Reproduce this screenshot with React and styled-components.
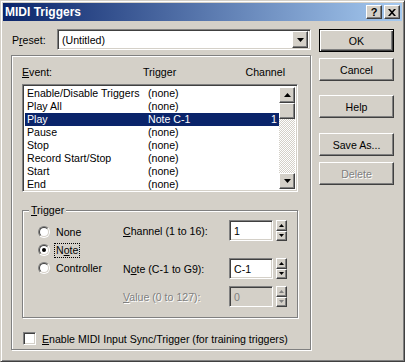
import React from 'react';
import styled, { createGlobalStyle, css } from 'styled-components';

const face = '#d4d0c8';

const GlobalStyle = createGlobalStyle`
  html, body {
    margin: 0;
    padding: 0;
    background: ${face};
  }
  body {
    font-family: "Liberation Sans", Arial, sans-serif;
    font-size: 10.6px;
    color: #000;
  }
  * {
    box-sizing: border-box;
  }
`;

const raised = css`
  border: 1px solid;
  border-color: #fff #404040 #404040 #fff;
  box-shadow: inset -1px -1px #808080, inset 1px 1px ${face};
  background: ${face};
`;

const sunken = css`
  border: 1px solid;
  border-color: #808080 #fff #fff #808080;
  box-shadow: inset 1px 1px #404040, inset -1px -1px ${face};
`;

const etched = css`
  border: 1px solid #808080;
  box-shadow: inset 1px 1px #fff, 1px 1px #fff;
`;

const disabledText = css`
  color: #808080;
  text-shadow: 1px 1px #fff;
`;

const Window = styled.div`
  width: 405px;
  height: 362px;
  display: flex;
  flex-direction: column;
  padding: 2px;
  background: ${face};
  border: 1px solid;
  border-color: ${face} #404040 #404040 ${face};
  box-shadow: inset 1px 1px #fff, inset -1px -1px #808080;
`;

const TitleBar = styled.div`
  height: 18px;
  display: flex;
  align-items: center;
  padding: 0 2px 0 2px;
  background: linear-gradient(to right, #0a246a, #a6caf0);
  color: #fff;
  font-weight: bold;
  font-size: 12px;
`;

const TitleText = styled.span`
  flex: 1;
`;

const CaptionButton = styled.div`
  ${raised};
  width: 16px;
  height: 14px;
  display: flex;
  align-items: center;
  justify-content: center;
  color: #000;
  font-size: 11px;
  font-weight: bold;
  margin-left: ${(p) => p.$gap || 0}px;
`;

const Body = styled.div`
  flex: 1;
  display: flex;
  gap: 7px;
  padding: 8px 0 0 8px;
`;

const LeftColumn = styled.div`
  width: 301px;
  display: flex;
  flex-direction: column;
`;

const PresetRow = styled.div`
  height: 21px;
  display: flex;
  align-items: center;
`;

const PresetLabel = styled.span`
  width: 46px;
  padding-left: 1px;
`;

const Combo = styled.div`
  ${sunken};
  width: 254px;
  height: 21px;
  background: #fff;
  display: flex;
  align-items: center;
  padding: 2px 2px 2px 4px;
`;

const ComboText = styled.span`
  flex: 1;
`;

const ArrowButton = styled.div`
  ${raised};
  width: 16px;
  height: ${(p) => p.$h || 16}px;
  display: flex;
  align-items: center;
  justify-content: center;
`;

const MainFrame = styled.div`
  ${etched};
  width: 300px;
  height: 295px;
  margin-top: 5px;
  padding: 10px 0 0 10px;
  display: flex;
  flex-direction: column;
`;

const ListHeader = styled.div`
  width: 276px;
  height: 13px;
  line-height: 13px;
  display: grid;
  grid-template-columns: 121px 1fr auto;
  padding-right: 13px;
  margin-bottom: 5px;
`;

const ListBox = styled.div`
  ${sunken};
  width: 276px;
  height: 108px;
  background: #fff;
  padding: 2px;
  display: flex;
`;

const Rows = styled.div`
  flex: 1;
`;

const Row = styled.div`
  height: 13px;
  line-height: 13px;
  display: grid;
  grid-template-columns: 121px 1fr auto;
  padding: 0 2px;
  white-space: nowrap;
  ${(p) =>
    p.$selected &&
    css`
      background: #0a246a;
      color: #fff;
    `}
`;

const ScrollBar = styled.div`
  width: 16px;
  display: flex;
  flex-direction: column;
  background: repeating-conic-gradient(${face} 0 25%, #fff 0 50%) 0 0 / 2px 2px;
`;

const Track = styled.div`
  flex: 1;
`;

const Thumb = styled.div`
  ${raised};
  height: 16px;
`;

const GroupBox = styled.fieldset`
  ${etched};
  width: 276px;
  height: 114px;
  margin: 12px 0 0 0;
  padding: 0;
  display: flex;
`;

const GroupLegend = styled.legend`
  margin-left: 6px;
  padding: 0 2px;
  line-height: 13px;
  background: ${face};
`;

const RadioColumn = styled.div`
  width: 100px;
  padding: 6px 0 0 15px;
  display: flex;
  flex-direction: column;
`;

const RadioRow = styled.div`
  height: 18px;
  display: flex;
  align-items: center;
  gap: 4px;
`;

const RadioOuter = styled.span`
  width: 12px;
  height: 12px;
  border-radius: 50%;
  border: 1px solid;
  border-color: #808080 #fff #fff #808080;
  display: flex;
  align-items: center;
  justify-content: center;
  flex-shrink: 0;
`;

const RadioInner = styled.span`
  width: 10px;
  height: 10px;
  border-radius: 50%;
  border: 1px solid;
  border-color: #404040 ${face} ${face} #404040;
  background: #fff;
  display: flex;
  align-items: center;
  justify-content: center;
  &::after {
    content: '';
    width: 4px;
    height: 4px;
    border-radius: 50%;
    background: #000;
    display: ${(p) => (p.$checked ? 'block' : 'none')};
  }
`;

const RadioLabel = styled.span`
  line-height: 13px;
  padding: 0 1px;
  border: 1px ${(p) => (p.$focus ? 'dotted #000' : 'solid transparent')};
`;

const FieldColumn = styled.div`
  padding-top: 3px;
  display: flex;
  flex-direction: column;
`;

const FieldRow = styled.div`
  display: flex;
  align-items: center;
  margin-top: ${(p) => p.$mt || 0}px;
`;

const FieldLabel = styled.span`
  width: 106px;
  ${(p) => p.$disabled && disabledText};
`;

const Edit = styled.div`
  ${sunken};
  width: 44px;
  height: 21px;
  display: flex;
  align-items: center;
  padding-left: 4px;
  background: ${(p) => (p.$disabled ? face : '#fff')};
  ${(p) => p.$disabled && 'color: #808080;'};
`;

const Spin = styled.div`
  width: 11px;
  height: 21px;
  margin-left: 3px;
  display: flex;
  flex-direction: column;
`;

const SpinHalf = styled.div`
  ${raised};
  flex: 1;
  display: flex;
  align-items: center;
  justify-content: center;
`;

const CheckRow = styled.div`
  display: flex;
  align-items: center;
  gap: 6px;
  margin: 14px 0 0 1px;
`;

const CheckBox = styled.span`
  ${sunken};
  width: 13px;
  height: 13px;
  background: #fff;
`;

const RightColumn = styled.div`
  display: flex;
  flex-direction: column;
`;

const Button = styled.div`
  ${raised};
  width: 75px;
  height: 23px;
  display: flex;
  align-items: center;
  justify-content: center;
  margin-top: ${(p) => p.$gap || 0}px;
  ${(p) =>
    p.$default &&
    css`
      border-color: #000;
      box-shadow: inset 1px 1px #fff, inset -1px -1px #404040, inset -2px -2px #808080;
    `}
  ${(p) => p.$disabled && disabledText};
`;

const Arrow = ({ down, color = '#000', w = 7 }) => {
  const h = Math.ceil(w / 2);
  const pts = down ? `0,0 ${w},0 ${w / 2},${h}` : `0,${h} ${w},${h} ${w / 2},0`;
  return (
    <svg width={w} height={h} viewBox={`0 0 ${w} ${h}`}>
      <polygon points={pts} fill={color} />
    </svg>
  );
};

const CloseGlyph = () => (
  <svg width="8" height="7" viewBox="0 0 8 7">
    <path d="M0 0L2 0L4 2.2L6 0L8 0L5 3.5L8 7L6 7L4 4.8L2 7L0 7L3 3.5Z" fill="#000" />
  </svg>
);

const rows = [
  ['Enable/Disable Triggers', '(none)', ''],
  ['Play All', '(none)', ''],
  ['Play', 'Note C-1', '1'],
  ['Pause', '(none)', ''],
  ['Stop', '(none)', ''],
  ['Record Start/Stop', '(none)', ''],
  ['Start', '(none)', ''],
  ['End', '(none)', ''],
];

const radios = [
  { label: 'None' },
  { label: 'Note', checked: true },
  { label: 'Controller' },
];

const SpinBox = ({ disabled }) => (
  <Spin>
    <SpinHalf>
      <Arrow w={5} color={disabled ? '#808080' : '#000'} />
    </SpinHalf>
    <SpinHalf>
      <Arrow w={5} down color={disabled ? '#808080' : '#000'} />
    </SpinHalf>
  </Spin>
);

const App = () => (
  <>
    <GlobalStyle />
    <Window>
      <TitleBar>
        <TitleText>MIDI Triggers</TitleText>
        <CaptionButton>?</CaptionButton>
        <CaptionButton $gap={2}>
          <CloseGlyph />
        </CaptionButton>
      </TitleBar>
      <Body>
        <LeftColumn>
          <PresetRow>
            <PresetLabel>
              P<u>r</u>eset:
            </PresetLabel>
            <Combo>
              <ComboText>(Untitled)</ComboText>
              <ArrowButton $h={17}>
                <Arrow down />
              </ArrowButton>
            </Combo>
          </PresetRow>
          <MainFrame>
            <ListHeader>
              <span>
                <u>E</u>vent:
              </span>
              <span>Trigger</span>
              <span>Channel</span>
            </ListHeader>
            <ListBox>
              <Rows>
                {rows.map(([name, trig, ch], i) => (
                  <Row key={name} $selected={i === 2}>
                    <span>{name}</span>
                    <span>{trig}</span>
                    <span>{ch}</span>
                  </Row>
                ))}
              </Rows>
              <ScrollBar>
                <ArrowButton>
                  <Arrow />
                </ArrowButton>
                <Thumb />
                <Track />
                <ArrowButton>
                  <Arrow down />
                </ArrowButton>
              </ScrollBar>
            </ListBox>
            <GroupBox>
              <GroupLegend>
                <u>T</u>rigger
              </GroupLegend>
              <RadioColumn>
                {radios.map((r) => (
                  <RadioRow key={r.label}>
                    <RadioOuter>
                      <RadioInner $checked={r.checked} />
                    </RadioOuter>
                    <RadioLabel $focus={r.checked}>
                      {r.label === 'Note' ? (
                        <>
                          N<u>o</u>te
                        </>
                      ) : (
                        r.label
                      )}
                    </RadioLabel>
                  </RadioRow>
                ))}
              </RadioColumn>
              <FieldColumn>
                <FieldRow>
                  <FieldLabel>
                    <u>C</u>hannel (1 to 16):
                  </FieldLabel>
                  <Edit>1</Edit>
                  <SpinBox />
                </FieldRow>
                <FieldRow $mt={17}>
                  <FieldLabel>
                    N<u>o</u>te (C-1 to G9):
                  </FieldLabel>
                  <Edit>C-1</Edit>
                  <SpinBox />
                </FieldRow>
                <FieldRow $mt={7}>
                  <FieldLabel $disabled>
                    <u>V</u>alue (0 to 127):
                  </FieldLabel>
                  <Edit $disabled>0</Edit>
                  <SpinBox disabled />
                </FieldRow>
              </FieldColumn>
            </GroupBox>
            <CheckRow>
              <CheckBox />
              <span>
                <u>E</u>nable MIDI Input Sync/Trigger (for training triggers)
              </span>
            </CheckRow>
          </MainFrame>
        </LeftColumn>
        <RightColumn>
          <Button $default>OK</Button>
          <Button $gap={6}>Cancel</Button>
          <Button $gap={14}>Help</Button>
          <Button $gap={15}>Save As...</Button>
          <Button $gap={6} $disabled>
            Delete
          </Button>
        </RightColumn>
      </Body>
    </Window>
  </>
);

export default App;
